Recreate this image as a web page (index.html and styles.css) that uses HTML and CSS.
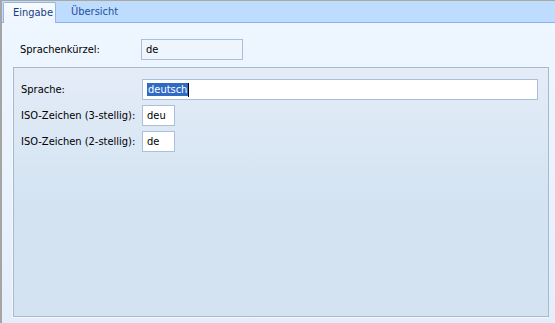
FILE: index.html
```html
<!DOCTYPE html>
<html lang="de">
<head>
<meta charset="utf-8">
<title>Sprache</title>
<link rel="stylesheet" href="styles.css">
</head>
<body>
<div class="window">
  <div class="tabs">
    <div class="tab active">Eingabe</div>
    <div class="tab">Übersicht</div>
  </div>
  <div class="content">
    <div class="row top-row">
      <span class="label">Sprachenkürzel:</span>
      <span class="field readonly">de</span>
    </div>
    <div class="panel">
      <div class="row">
        <span class="label">Sprache:</span>
        <span class="field wide"><span class="sel">deutsch</span><span class="caret"></span></span>
      </div>
      <div class="row">
        <span class="label">ISO-Zeichen (3-stellig):</span>
        <span class="field small">deu</span>
      </div>
      <div class="row">
        <span class="label">ISO-Zeichen (2-stellig):</span>
        <span class="field small">de</span>
      </div>
    </div>
  </div>
</div>
</body>
</html>
```

FILE: styles.css
```css
html, body {
  margin: 0;
  padding: 0;
}
body {
  width: 555px;
  height: 323px;
  overflow: hidden;
  font-family: "DejaVu Sans Condensed", "DejaVu Sans", sans-serif;
  font-size: 11px;
  color: #000;
}
.window {
  box-sizing: border-box;
  width: 555px;
  height: 323px;
  border-top: 1px solid #aca899;
  border-left: 2px solid #a5a5a5;
  background: #eaf2fc;
  display: flex;
  flex-direction: column;
}
.tabs {
  box-sizing: border-box;
  height: 22px;
  background: #bedcfd;
  border-bottom: 1px solid #8db2e3;
  display: flex;
  align-items: flex-end;
  padding-left: 1px;
}
.tab {
  box-sizing: border-box;
  height: 20px;
  line-height: 19px;
  padding: 0 15px 0 15px;
  color: #1d4fa3;
}
.tab.active {
  height: 21px;
  margin-bottom: -1px;
  padding: 0 0 0 9px;
  width: 53px;
  background: linear-gradient(#f7fbff, #eef5fe);
  border: 1px solid #97b7e2;
  border-bottom: none;
  border-radius: 2px 2px 0 0;
  color: #163e86;
  line-height: 20px;
}
.content {
  flex: 1;
  display: flex;
  flex-direction: column;
  padding: 16px 6px 6px 11px;
  background: linear-gradient(#eef6ff, #e4eefb);
}
.row {
  display: flex;
  align-items: center;
  padding-left: 7px;
}
.top-row {
  margin-bottom: 7px;
}
.label {
  width: 121px;
  flex: none;
}
.field {
  box-sizing: border-box;
  height: 21px;
  line-height: 19px;
  padding: 0 4px;
  border: 1px solid #a9bfdc;
  background: #fff;
  display: flex;
  align-items: center;
}
.field.readonly {
  width: 102px;
  background: #eef5fd;
}
.field.wide {
  width: 396px;
}
.field.small {
  width: 33px;
}
.sel {
  background: #316ac5;
  color: #fff;
  line-height: 13px;
  padding: 0 1px;
}
.caret {
  width: 1px;
  height: 14px;
  background: #000;
}
.panel {
  flex: 1;
  display: flex;
  flex-direction: column;
  gap: 5px;
  padding-top: 11px;
  border: 1px solid #a8b9cf;
  box-shadow: -1px 1px 0 #f4f8fd;
  background: linear-gradient(#e4ecf7, #d3e3f2 55%, #d3e3f2);
}
```
